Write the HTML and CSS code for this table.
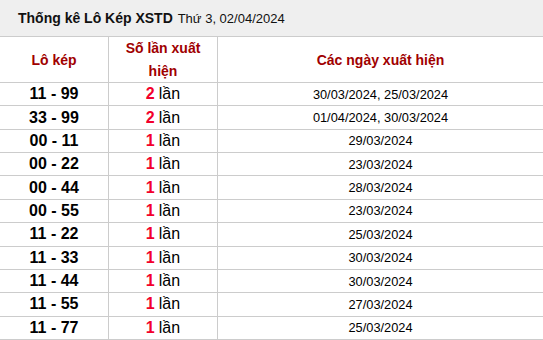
FILE: index.html
```html
<!DOCTYPE html>
<html lang="vi">
<head>
<meta charset="utf-8">
<title>Thống kê Lô Kép XSTD</title>
<link rel="stylesheet" href="styles.css">
</head>
<body>
<div class="panel">
  <div class="title"><b>Thống kê Lô Kép XSTD</b> <span class="when">Thứ 3, 02/04/2024</span></div>
  <div class="row head">
    <div class="cell">Lô kép</div>
    <div class="cell">Số lần xuất hiện</div>
    <div class="cell last">Các ngày xuất hiện</div>
  </div>
  <div class="row"><div class="cell pair">11 - 99</div><div class="cell cnt"><b>2</b> lần</div><div class="cell last date">30/03/2024, 25/03/2024</div></div>
  <div class="row"><div class="cell pair">33 - 99</div><div class="cell cnt"><b>2</b> lần</div><div class="cell last date">01/04/2024, 30/03/2024</div></div>
  <div class="row"><div class="cell pair">00 - 11</div><div class="cell cnt"><b>1</b> lần</div><div class="cell last date">29/03/2024</div></div>
  <div class="row"><div class="cell pair">00 - 22</div><div class="cell cnt"><b>1</b> lần</div><div class="cell last date">23/03/2024</div></div>
  <div class="row"><div class="cell pair">00 - 44</div><div class="cell cnt"><b>1</b> lần</div><div class="cell last date">28/03/2024</div></div>
  <div class="row"><div class="cell pair">00 - 55</div><div class="cell cnt"><b>1</b> lần</div><div class="cell last date">23/03/2024</div></div>
  <div class="row"><div class="cell pair">11 - 22</div><div class="cell cnt"><b>1</b> lần</div><div class="cell last date">25/03/2024</div></div>
  <div class="row"><div class="cell pair">11 - 33</div><div class="cell cnt"><b>1</b> lần</div><div class="cell last date">30/03/2024</div></div>
  <div class="row"><div class="cell pair">11 - 44</div><div class="cell cnt"><b>1</b> lần</div><div class="cell last date">30/03/2024</div></div>
  <div class="row"><div class="cell pair">11 - 55</div><div class="cell cnt"><b>1</b> lần</div><div class="cell last date">27/03/2024</div></div>
  <div class="row"><div class="cell pair">11 - 77</div><div class="cell cnt"><b>1</b> lần</div><div class="cell last date">25/03/2024</div></div>
</div>
</body>
</html>
```
FILE: styles.css
```css
html, body {
  margin: 0;
  padding: 0;
  background: #fff;
}
body {
  font-family: "Liberation Sans", Arial, sans-serif;
  color: #000;
}
.panel {
  width: 543px;
}
.title {
  box-sizing: border-box;
  height: 37px;
  padding-left: 18px;
  background: #efefef;
  border-bottom: 1px solid #cccccc;
  font-size: 14px;
  line-height: 36px;
  color: #111;
}
.title b {
  font-weight: bold;
}
.title .when {
  font-size: 13px;
  margin-left: 1px;
}
.row {
  box-sizing: border-box;
  display: grid;
  grid-template-columns: 109px 109px 1fr;
  height: 23.36px;
  border-bottom: 1px solid #cccccc;
}
.row.head {
  height: 46px;
}
.cell {
  box-sizing: border-box;
  border-right: 1px solid #cccccc;
  display: flex;
  align-items: center;
  justify-content: center;
  text-align: center;
  overflow: visible;
}
.cell.last {
  border-right: none;
}
.head .cell {
  color: #a00000;
  font-weight: bold;
  font-size: 14px;
  line-height: 23px;
  padding: 0 8px;
}
.pair {
  font-weight: bold;
  font-size: 16px;
}
.cnt {
  font-size: 16px;
}
.cnt b {
  color: #f2002c;
  font-weight: bold;
  margin-right: 4px;
}
.date {
  font-size: 12.8px;
}
```
